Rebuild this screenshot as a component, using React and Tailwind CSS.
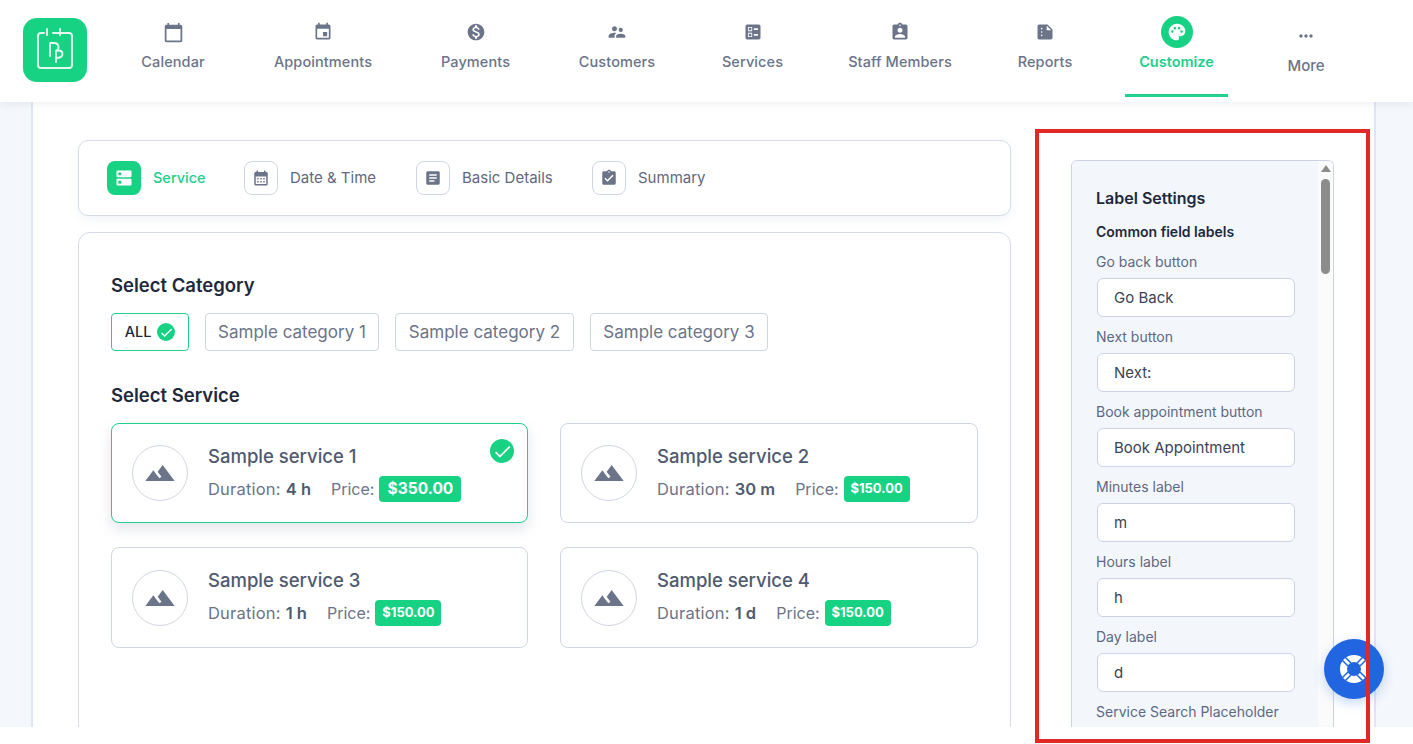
import React from "react";
import {
  MdCalendarToday, MdEvent, MdMonetizationOn, MdSupervisorAccount, MdBallot, MdAssignmentInd, MdSummarize,
  MdPalette, MdMoreHoriz, MdDns, MdCalendarMonth, MdArticle, MdAssignmentTurnedIn, MdTerrain, MdCheck,
} from "react-icons/md";

const navItems = [
  { label: "Calendar", Icon: MdCalendarToday, w: "w-[94px]", size: 21 },
  { label: "Appointments", Icon: MdEvent, w: "w-[128px]", size: 20 },
  { label: "Payments", Icon: MdMonetizationOn, w: "w-[99px]", size: 20 },
  { label: "Customers", Icon: MdSupervisorAccount, w: "w-[106px]", size: 20 },
  { label: "Services", Icon: MdBallot, w: "w-[87px]", size: 20 },
  { label: "Staff Members", Icon: MdAssignmentInd, w: "w-[130px]", size: 20 },
  { label: "Reports", Icon: MdSummarize, w: "w-[82px]", size: 20 },
];

const steps = [
  { label: "Date & Time", Icon: MdCalendarMonth, w: "w-[172px]" },
  { label: "Basic Details", Icon: MdArticle, w: "w-[176px]" },
  { label: "Summary", Icon: MdAssignmentTurnedIn, w: "w-[120px]" },
];

const services = [
  { name: "Sample service 1", dur: "4 h", price: "$350.00", active: true },
  { name: "Sample service 2", dur: "30 m", price: "$150.00" },
  { name: "Sample service 3", dur: "1 h", price: "$150.00", tall: true },
  { name: "Sample service 4", dur: "1 d", price: "$150.00", tall: true },
];

const fields = [
  ["Go back button", "Go Back"],
  ["Next button", "Next:"],
  ["Book appointment button", "Book Appointment"],
  ["Minutes label", "m"],
  ["Hours label", "h"],
  ["Day label", "d"],
  ["Service Search Placeholder", "Search"],
];

function Logo() {
  return (
    <div className="w-16 h-16 rounded-[14px] bg-[#18d284] shrink-0">
      <svg viewBox="0 0 64 64" className="w-16 h-16" fill="none" stroke="#e2faf0" strokeWidth="1.9" strokeLinecap="round" strokeLinejoin="round">
        <path d="M21 15h-3a3 3 0 0 0-3 3v29a3 3 0 0 0 3 3h28a3 3 0 0 0 3-3V18a3 3 0 0 0-3-3H30" />
        <path d="M24 11v6M37 11v6" />
        <path d="M27 38V25h4q4.500 0 4.500 4.500q0 2.500-2.500 3.500" />
        <path d="M33 44V34q0-1.500 2-1.500q4.500 0 4.500 3.500q0 4-6.500 4" />
      </svg>
    </div>
  );
}

function Nav() {
  return (
    <header className="relative z-10 h-[102px] bg-white shadow-[0_2px_8px_rgba(120,130,160,0.12)] flex pl-[23px]">
      <div className="pt-[18px]"><Logo /></div>
      <nav className="flex gap-[39px] ml-[39px]">
        {navItems.map(({ label, Icon, w, size }) => (
          <a key={label} className={`${w} flex flex-col items-center pt-4`}>
            <span className="h-8 flex items-center justify-center text-[#6b7489]"><Icon size={size} /></span>
            <span className="mt-[3px] text-[14.5px] leading-[21px] font-medium tracking-[0.1px] text-[#6b7489] whitespace-nowrap">{label}</span>
          </a>
        ))}
        <a className="w-[103px] h-[97px] flex flex-col items-center pt-4 border-b-[3px] border-[#22cf8c]">
          <span className="w-8 h-8 rounded-full bg-[#18d284] flex items-center justify-center text-white"><MdPalette size={20} /></span>
          <span className="mt-[3px] text-[14.5px] leading-[21px] font-semibold text-[#22cf8c]">Customize</span>
        </a>
        <a className="w-[78px] flex flex-col items-center pt-5">
          <span className="h-8 flex items-center justify-center text-[#6b7489]"><MdMoreHoriz size={20} /></span>
          <span className="mt-[3px] text-[15px] leading-[21px] font-medium text-[#6b7489]">More</span>
        </a>
      </nav>
    </header>
  );
}

function Stepper() {
  return (
    <div className="h-[76px] rounded-[10px] border border-[#d6dbe7] bg-white shadow-[0_4px_10px_rgba(120,130,160,0.08)] flex items-center pl-7">
      <div className="w-[137px] flex items-center gap-3">
        <span className="w-[34px] h-[34px] rounded-lg bg-[#18d284] flex items-center justify-center text-white"><MdDns size={20} /></span>
        <span className="text-[14.5px] font-medium text-[#22cf8c]">Service</span>
      </div>
      {steps.map(({ label, Icon, w }) => (
        <div key={label} className={`${w} flex items-center gap-3`}>
          <span className="w-[34px] h-[34px] rounded-lg border border-[#d0d5e2] flex items-center justify-center text-[#6b7489]"><Icon size={18} /></span>
          <span className="text-[15px] text-[#5f6880] whitespace-nowrap">{label}</span>
        </div>
      ))}
    </div>
  );
}

function Chip({ children, active, w }) {
  return (
    <span className={`${w} h-[38px] rounded-[4px] border flex items-center justify-center ${active ? "gap-[6px] text-[14.5px] border-[#22cf8c] text-[#1e293b] font-medium" : "pt-[1px] text-[17px] border-[#d0d5e2] text-[#6b7489]"}`}>
      {children}
    </span>
  );
}

function ServiceCard({ name, dur, price, active, tall }) {
  return (
    <div className={`relative rounded-[8px] border bg-white flex items-start pl-5 ${tall ? "h-[101px] pt-[22px]" : "h-[100px] pt-[21px]"} ${active ? "border-[#22cf8c] shadow-[0_6px_14px_rgba(100,110,140,0.18)]" : "border-[#d0d5e2]"}`}>
      <span className="w-14 h-14 rounded-full border border-[#d0d5e2] flex items-center justify-center text-[#6b7489] shrink-0"><MdTerrain size={32} /></span>
      <div className={`ml-5 ${tall ? "-mt-[2px]" : "-mt-[1px]"}`}>
        <div className="text-[18.5px] leading-[24px] font-medium text-[#4f5a70]">{name}</div>
        <div className="mt-2 flex items-center h-[26px] text-[#6b7489]">
          <span className="text-[16.5px] tracking-[0.2px]">Duration:</span>
          <span className="ml-[5px] text-[16.5px] font-semibold text-[#4f5a70]">{dur}</span>
          <span className="ml-5 text-[16px]">Price:</span>
          <span className={`ml-[5px] h-[26px] rounded-[4px] bg-[#18d284] text-white flex items-center justify-center ${active ? "w-[82px] text-[15.5px] font-bold" : "w-[66px] text-[13px] font-bold"}`}>{price}</span>
        </div>
      </div>
      {active && (
        <span className="absolute right-[13px] top-[15px] w-6 h-6 rounded-full bg-[#18d284] flex items-center justify-center text-white"><MdCheck size={21} /></span>
      )}
    </div>
  );
}

function Settings() {
  return (
    <aside className="w-[263px] mt-5 h-[567px] flex rounded-t-[6px] border border-b-0 border-[#cdd3e4] overflow-hidden shrink-0">
      <div className="w-[247px] bg-[#f3f7fc] pl-6 pt-[25px]">
        <h3 className="text-[16px] leading-6 font-semibold text-[#1e293b]">Label Settings</h3>
        <h4 className="mt-3 text-[14px] leading-[20px] font-semibold text-[#1e293b]">Common field labels</h4>
        {fields.map(([label, value]) => (
          <div key={label} className="mt-[10px]">
            <label className="block text-[14px] leading-[20px] text-[#5f6880] whitespace-nowrap">{label}</label>
            <input readOnly value={value} className="mt-[6px] ml-px block w-[198px] h-[39px] rounded-[6px] border border-[#cdd3e4] bg-white pl-4 text-[15px] text-[#3a4356] outline-none" />
          </div>
        ))}
      </div>
      <div className="w-[15px] bg-[#fbfbfb] flex flex-col items-center">
        <span className="mt-[4px] w-0 h-0 border-x-[5px] border-x-transparent border-b-[7px] border-b-[#8c8c8c]" />
        <span className="mt-[7px] w-[9px] h-[95px] rounded-full bg-[#8c8c8c]" />
      </div>
    </aside>
  );
}

function LifeRing() {
  return (
    <svg viewBox="0 0 32 32" className="w-8 h-8" fill="none">
      <circle cx="16" cy="16" r="10.500" stroke="#fff" strokeWidth="7" />
      <g stroke="#2166e0" strokeWidth="1.500">
        <path d="M7.500 4.500L13 10M4.500 7.500L10 13" />
        <path d="M24.500 4.500L19 10M27.500 7.500L22 13" />
        <path d="M7.500 27.500L13 22M4.500 24.500L10 19" />
        <path d="M24.500 27.500L19 22M27.500 24.500L22 19" />
      </g>
    </svg>
  );
}

export default function App() {
  return (
    <div className="relative w-[1413px] h-[744px] overflow-hidden bg-white font-['Inter',sans-serif]">
      <Nav />
      <main className="h-[625px] bg-[#f4f7fb] pl-[31px] pr-[37px] overflow-hidden">
        <div className="h-full bg-white border-x-2 border-x-[#dfe5f5] flex pl-[45px] pt-[38px] gap-[60px]">
          <div className="w-[933px] shrink-0">
            <Stepper />
            <section className="mt-4 h-[560px] rounded-[12px] border border-[#d6dbe7] pl-8 pr-8 pt-[39px]">
              <h2 className="text-[18.5px] leading-[27px] font-semibold text-[#1e293b]">Select Category</h2>
              <div className="mt-[14px] flex gap-4">
                <Chip active w="w-[78px]">ALL <span className="w-[18px] h-[18px] rounded-full bg-[#18d284] flex items-center justify-center text-white"><MdCheck size={15} /></span></Chip>
                <Chip w="w-[174px]">Sample category 1</Chip>
                <Chip w="w-[179px]">Sample category 2</Chip>
                <Chip w="w-[178px]">Sample category 3</Chip>
              </div>
              <h2 className="mt-[31px] text-[18.5px] leading-[27px] font-semibold text-[#1e293b]">Select Service</h2>
              <div className="mt-[14px] grid grid-cols-[417px_418px] gap-x-8 gap-y-6">
                {services.map((s) => <ServiceCard key={s.name} {...s} />)}
              </div>
            </section>
          </div>
          <Settings />
        </div>
      </main>
      <button className="absolute left-[1324px] top-[639px] w-[60px] h-[60px] rounded-full bg-[#2166e0] flex items-center justify-center shadow-[0_4px_12px_rgba(33,102,224,0.25)]">
        <LifeRing />
      </button>
      <div className="absolute left-[1035px] top-[129px] w-[335px] h-[614px] border-4 border-[#e32626] pointer-events-none" />
    </div>
  );
}
